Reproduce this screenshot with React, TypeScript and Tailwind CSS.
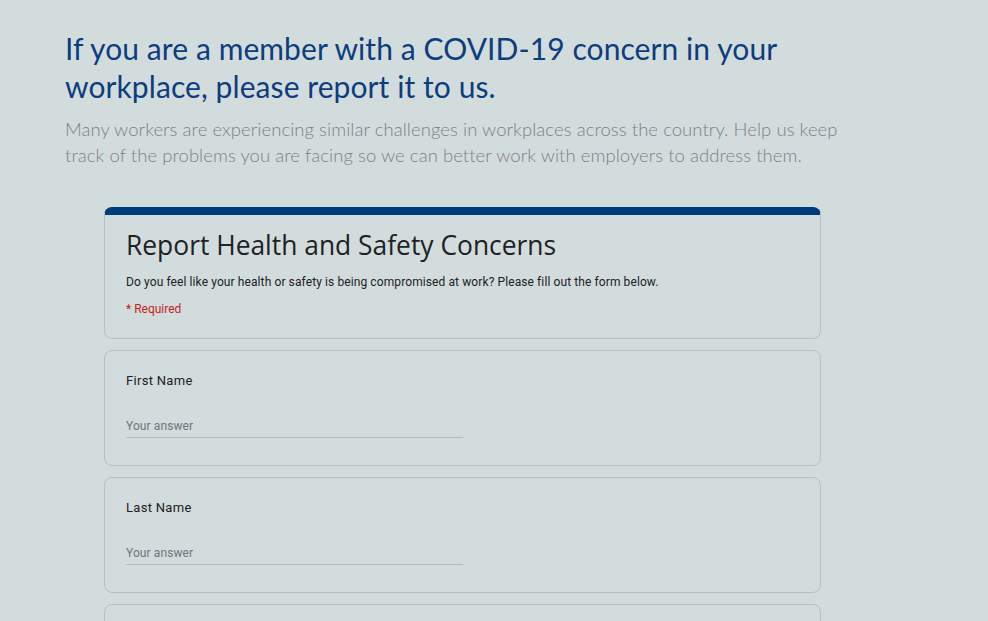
import React from "react";

function Field({ label }: { label: string }) {
  return (
    <div className="mt-[11px] rounded-lg border border-[#b8c0c2] pl-[21px] pr-6 pt-[20px] pb-[27px]">
      <div className="text-[13px] leading-[20px] tracking-[0.3px] text-[#202124]" style={{ fontFamily: "Roboto, 'Liberation Sans', sans-serif" }}>
        {label}
      </div>
      <div className="mt-[27px] w-[337px] border-b border-[#b3bbbd] pb-[3px]">
        <div className="text-[12px] leading-[16px] text-[#6f7478] tracking-[0.1px]" style={{ fontFamily: "Roboto, 'Liberation Sans', sans-serif" }}>
          Your answer
        </div>
      </div>
    </div>
  );
}

export default function App() {
  return (
    <div className="h-[621px] w-full bg-[#d3dcdd] overflow-hidden">
      <div className="pl-[65px] pt-[29px]">
        <h1 className="text-[30px] leading-[38px] tracking-[0.08px] text-[#0c3d7e] font-normal" style={{ fontFamily: "Lato, 'Liberation Sans', sans-serif" }}>
          If you are a member with a COVID-19 concern in your
          <br />
          workplace, please report it to us.
        </h1>
        <p className="mt-[11px] text-[18.5px] leading-[26px] tracking-[0.05px] font-light text-[#7d8185]" style={{ fontFamily: "Lato, 'Liberation Sans', sans-serif" }}>
          Many workers are experiencing similar challenges in workplaces across the country. Help us keep
          <br />
          track of the problems you are facing so we can better work with employers to address them.
        </p>
        <div className="ml-[39px] mt-[39px] w-[717px]">
          <div className="rounded-lg border border-[#b8c0c2] border-t-[8px] border-t-[#003b7a] pl-[21px] pr-6 pt-[14px] pb-[21px]" style={{ fontFamily: "Roboto, 'Liberation Sans', sans-serif" }}>
            <div className="text-[26.4px] leading-[32px] text-[#202124]" style={{ fontFamily: "'Open Sans', Roboto, sans-serif" }}>
              Report Health and Safety Concerns
            </div>
            <div className="mt-[13px] text-[12px] leading-[16px] tracking-[0.1px] text-[#202124]">
              Do you feel like your health or safety is being compromised at work? Please fill out the form below.
            </div>
            <div className="mt-[11px] text-[12px] leading-[16px] text-[#c5221f]">* Required</div>
          </div>
          <Field label="First Name" />
          <Field label="Last Name" />
          <div className="mt-[11px] h-[116px] rounded-lg border border-[#b8c0c2]" />
        </div>
      </div>
    </div>
  );
}
